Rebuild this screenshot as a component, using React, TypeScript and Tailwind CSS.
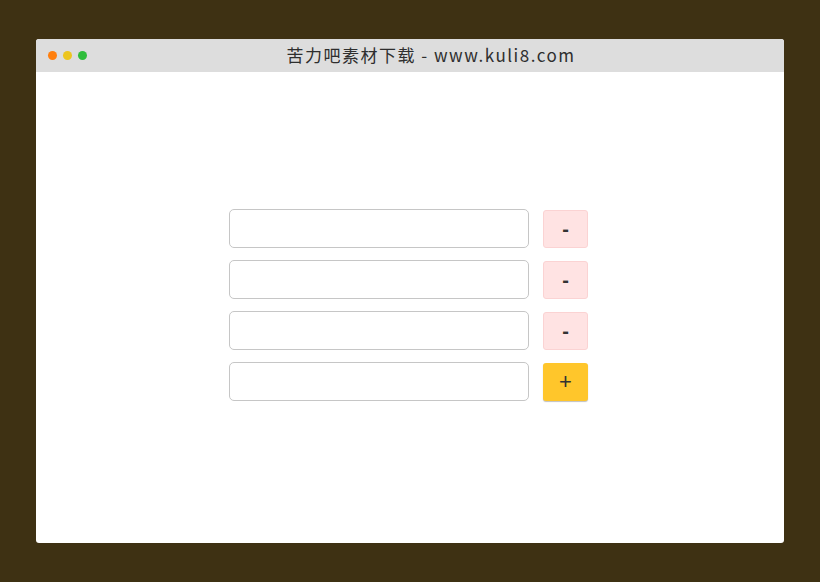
import { useState } from "react";

export default function App() {
  const [rows, setRows] = useState<string[]>(["", "", "", ""]);

  return (
    <div className="w-[820px] h-[582px] bg-[#3e3113] px-[36px] py-[39px]">
      <div className="h-full w-full rounded-[3px] bg-white overflow-hidden flex flex-col">
        {/* Title bar */}
        <div className="relative h-[33px] shrink-0 bg-[#dddddd] flex items-center justify-center">
          <div className="absolute left-[12px] top-[12px] flex gap-[6px]">
            <span className="w-[9px] h-[9px] rounded-full bg-[#ff7f0e]" />
            <span className="w-[9px] h-[9px] rounded-full bg-[#ecc51f]" />
            <span className="w-[9px] h-[9px] rounded-full bg-[#2fbd3b]" />
          </div>
          <span className="text-[17px] text-[#2e2e2e] leading-none tracking-[1.5px] font-['Noto_Sans_CJK_SC',sans-serif] pl-[42px] pb-[3px]">
            苦力吧素材下载 - www.kuli8.com
          </span>
        </div>

        {/* Content */}
        <div className="flex-1 pt-[137px] pl-[193px]">
          <div className="flex flex-col gap-[12px]">
            {rows.map((value, i) => {
              const last = i === rows.length - 1;
              return (
                <div key={i} className="flex items-center gap-[14px]">
                  <input
                    value={value}
                    onChange={(e) =>
                      setRows(rows.map((r, j) => (j === i ? e.target.value : r)))
                    }
                    className="w-[300px] h-[39px] rounded-[5px] border border-[#c6c6c6] px-3 outline-none text-sm"
                  />
                  {last ? (
                    <button
                      onClick={() => setRows([...rows, ""])}
                      className="w-[45px] h-[38px] rounded-[3px] bg-[#ffc62b] shadow-[0_1px_1px_rgba(0,0,0,0.25)] text-[#333] text-[22px] leading-none font-['Liberation_Sans',sans-serif] flex items-center justify-center"
                    >
                      +
                    </button>
                  ) : (
                    <button
                      onClick={() => setRows(rows.filter((_, j) => j !== i))}
                      className="w-[45px] h-[38px] rounded-[3px] bg-[#ffe3e3] border border-[#fbd3d3] text-[#333] text-[20px] font-bold leading-none font-['Liberation_Sans',sans-serif] flex items-center justify-center"
                    >
                      -
                    </button>
                  )}
                </div>
              );
            })}
          </div>
        </div>
      </div>
    </div>
  );
}
